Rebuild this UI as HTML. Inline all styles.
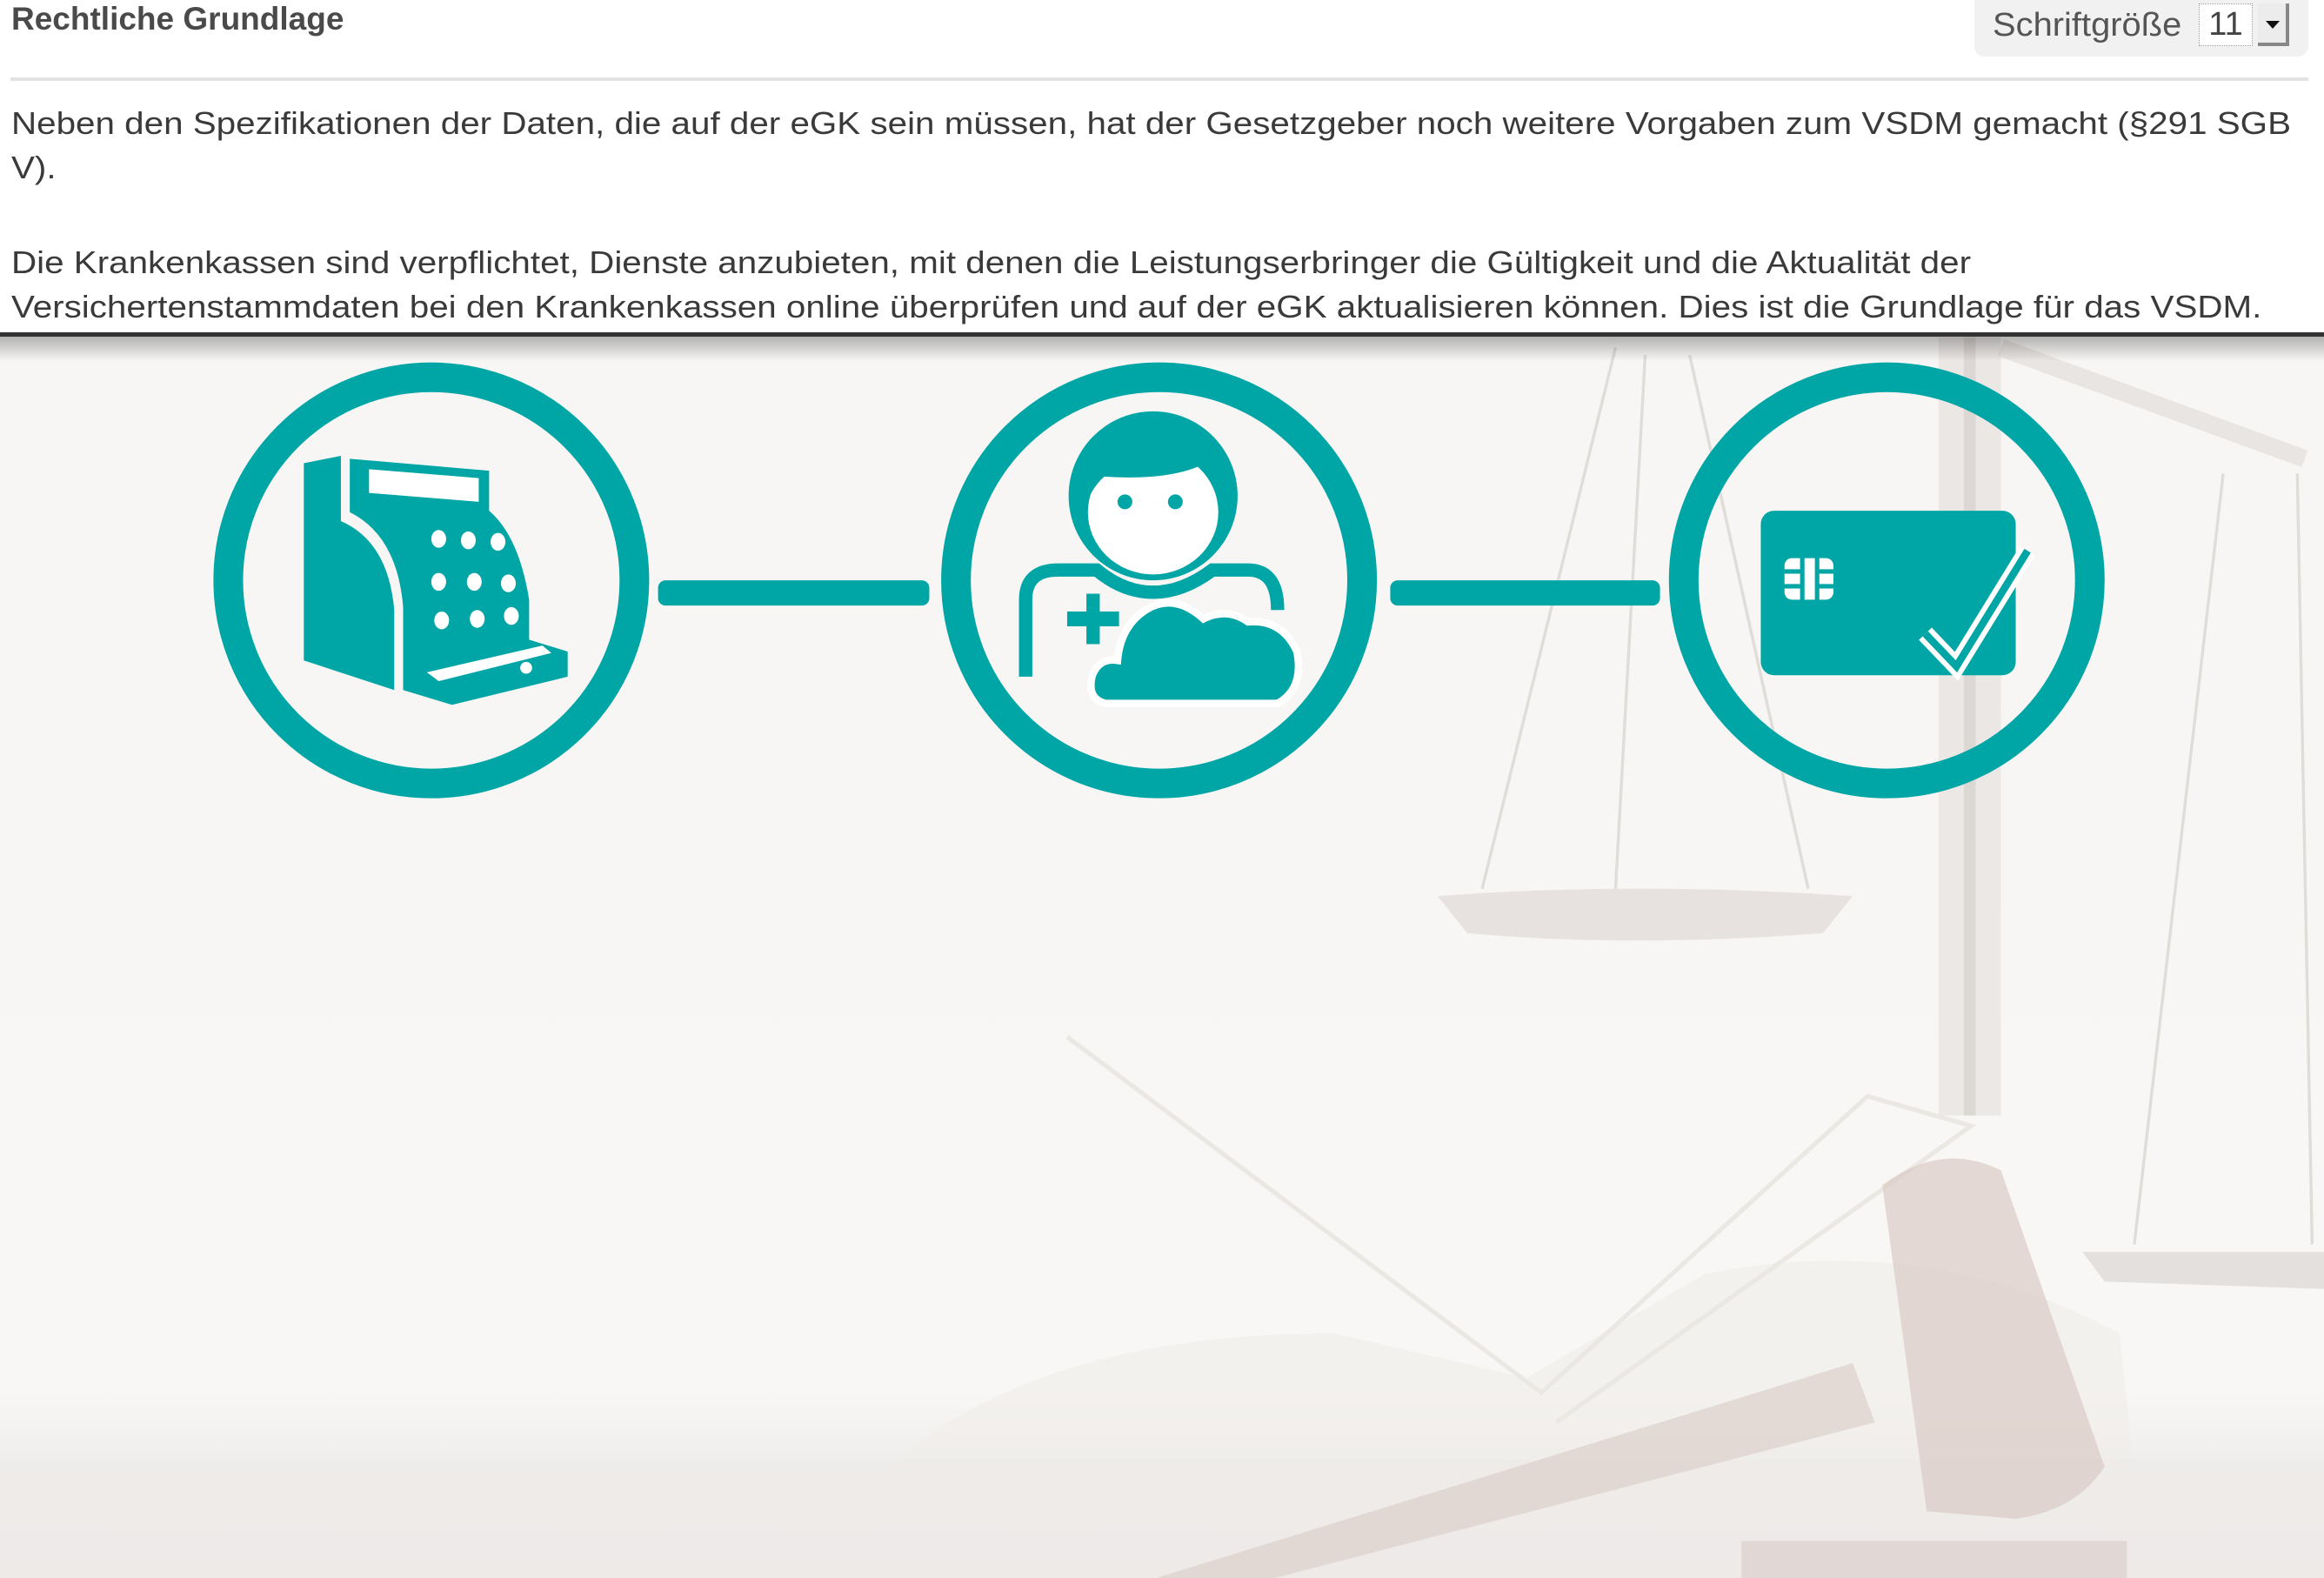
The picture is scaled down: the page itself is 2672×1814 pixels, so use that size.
<!DOCTYPE html>
<html><head><meta charset="utf-8">
<style>
html,body{margin:0;padding:0;width:2672px;height:1814px;overflow:hidden;background:#fff;font-family:"Liberation Sans",sans-serif;color:#3c3c3c}
.title{position:absolute;left:13px;top:0;font-size:37px;font-weight:bold;color:#4a4a4a;line-height:44px}
.fs{position:absolute;left:2270px;top:0;width:384px;height:65px;background:#f1f1f1;border-radius:0 0 12px 12px}
.fs span.l{position:absolute;left:21px;top:6px;font-size:38px;color:#555;line-height:46px;transform:scaleX(1.05);transform-origin:left}
.fs .num{position:absolute;left:258px;top:4px;width:62px;height:49px;background:#fff;border:1px dotted #999;box-sizing:border-box;font-size:38px;line-height:47px;text-align:center;color:#444}
.fs .dd{position:absolute;left:326px;top:4px;width:36px;height:49px;background:#ececec;border-right:4px solid #888;border-bottom:4px solid #888;box-sizing:border-box}
.fs .dd:after{content:"";position:absolute;left:9px;top:20px;border-left:8px solid transparent;border-right:8px solid transparent;border-top:9px solid #111}
.hr{position:absolute;left:12px;top:89px;width:2642px;height:4px;background:#e2e2e2}
.p{position:absolute;left:13px;font-size:36.5px;line-height:51px;color:#3a3a3a;white-space:nowrap;transform:scaleX(1.106);transform-origin:left top}
.dark{position:absolute;left:0;top:382px;width:2672px;height:5px;background:#333;z-index:3}
.shadow{position:absolute;left:0;top:387px;width:2672px;height:28px;background:linear-gradient(rgba(0,0,0,.28),rgba(0,0,0,0));z-index:3}
svg.bg{position:absolute;left:0;top:386px}
</style></head><body>
<div class="title">Rechtliche Grundlage</div>
<div class="fs"><span class="l">Schriftgröße</span><div class="num">11</div><div class="dd"></div></div>
<div class="hr"></div>
<div class="p" style="top:116px">Neben den Spezifikationen der Daten, die auf der eGK sein müssen, hat der Gesetzgeber noch weitere Vorgaben zum VSDM gemacht (§291 SGB<br>V).</div>
<div class="p" style="top:276px">Die Krankenkassen sind verpflichtet, Dienste anzubieten, mit denen die Leistungserbringer die Gültigkeit und die Aktualität der<br>Versichertenstammdaten bei den Krankenkassen online überprüfen und auf der eGK aktualisieren können. Dies ist die Grundlage für das VSDM.</div>
<svg class="bg" width="2672" height="1428" viewBox="0 227 1568 838" preserveAspectRatio="none">
<defs>
<linearGradient id="g" x1="0" y1="0" x2="0" y2="1"><stop offset="0" stop-color="#f7f6f4"/><stop offset="0.85" stop-color="#f8f7f5"/><stop offset="0.9" stop-color="#f1efed"/><stop offset="1" stop-color="#eeebe9"/></linearGradient>
</defs>
<rect x="0" y="227" width="1568" height="838" fill="url(#g)"/>
<rect x="1308" y="228" width="42" height="525" fill="#e2deda" opacity="0.6"/>
<rect x="1325" y="228" width="8" height="525" fill="#cdc7c4" opacity="0.5"/>
<path d="M1350,235 L1555,310" stroke="#dcd5d1" stroke-width="12" opacity="0.5"/>
<path d="M1090,235 L1000,600 M1110,240 L1090,600 M1140,240 L1220,600" stroke="#e0dcd8" stroke-width="2" fill="none"/>
<path d="M970,605 Q1100,595 1250,605 L1230,630 Q1100,640 990,630 Z" fill="#dcd6d2" opacity="0.6"/>
<path d="M1500,320 L1440,840 M1550,320 L1560,840" stroke="#e0dcd8" stroke-width="2"/>
<path d="M1405,845 L1568,845 L1568,870 L1420,865 Z" fill="#d6d0cd" opacity="0.6"/>
<path d="M600,990 Q700,900 900,900 L1030,930 L1150,860 Q1300,830 1430,900 L1440,990 L1000,1010 Z" fill="#f0edea" opacity="0.6"/>
<path d="M720,700 L1040,940 L1260,740 L1330,760 L1050,960" fill="none" stroke="#ebe7e3" stroke-width="3"/>
<rect x="0" y="985" width="1568" height="80" fill="#ece9e7" opacity="0.6"/>
<path d="M780,1065 L1250,920 L1265,960 L860,1065 Z" fill="#d9cbc6" opacity="0.6"/>
<path d="M1270,800 Q1310,770 1350,790 L1420,990 Q1400,1020 1360,1025 L1300,1020 Z" fill="#d7c7c1" opacity="0.65"/>
<rect x="1175" y="1040" width="260" height="25" fill="#d7c9c4" opacity="0.55"/>
<rect x="444" y="392" width="183" height="17" rx="5" fill="#00a5a5"/>
<rect x="938" y="392" width="182" height="17" rx="5" fill="#00a5a5"/>
<g fill="none" stroke="#00a5a5" stroke-width="20">
<circle cx="291" cy="392" r="137"/>
<circle cx="782" cy="392" r="137"/>
<circle cx="1273" cy="392" r="137"/>
</g>
<g fill="#00a5a5">
<path d="M205,313 L230,308 L230,352 Q262,366 266,412 L266,466 L205,446 Z"/>
<path d="M236,310 L330,318 L330,345 Q350,362 357,405 L357,432 L383,440 L383,457 L305,476 L272,466 L272,410 Q268,362 236,346 Z"/>
</g>
<g fill="#fff">
<polygon points="249,317 323,323 323,339 249,333"/>
<ellipse cx="296" cy="364" rx="5" ry="6"/><ellipse cx="316" cy="365" rx="5" ry="6"/><ellipse cx="336" cy="366" rx="5" ry="6"/>
<ellipse cx="296" cy="393" rx="5" ry="6"/><ellipse cx="320" cy="393" rx="5" ry="6"/><ellipse cx="343" cy="394" rx="5" ry="6"/>
<ellipse cx="298" cy="419" rx="5" ry="6"/><ellipse cx="322" cy="418" rx="5" ry="6"/><ellipse cx="345" cy="416" rx="5" ry="6"/>
<polygon points="288,454 366,436 372,441 296,460"/>
<circle cx="355" cy="451" r="4"/>
</g>
<path d="M692,457 L692,405 Q692,385 714,385 L740,385 Q758,400 778,400 Q798,400 818,385 L842,385 Q862,385 862,412" fill="none" stroke="#00a5a5" stroke-width="9"/>
<circle cx="778" cy="335" r="57" fill="#00a5a5"/>
<ellipse cx="778" cy="346" rx="44" ry="42" fill="#fff"/>
<path d="M731,345 Q728,282 778,279 Q828,282 826,345 Q822,322 815,312 Q792,325 745,322 Q736,330 731,345 Z" fill="#00a5a5"/>
<circle cx="759" cy="339" r="5" fill="#00a5a5"/><circle cx="793" cy="339" r="5" fill="#00a5a5"/>
<rect x="733" y="401" width="9" height="34" fill="#00a5a5"/><rect x="720" y="413" width="35" height="10" fill="#00a5a5"/>
<path d="M746,475 Q733,472 737,456 Q742,444 754,446 Q756,423 773,412 Q792,400 812,418 Q828,410 842,420 Q865,418 875,440 Q880,465 862,475 Z" fill="#00a5a5" stroke="#fff" stroke-width="5"/>
<rect x="1188" y="345" width="172" height="111" rx="9" fill="#00a5a5"/>
<g fill="#fff"><rect x="1204" y="377" width="33" height="28" rx="5"/></g>
<g stroke="#00a5a5" stroke-width="3"><line x1="1216" y1="375" x2="1216" y2="407"/><line x1="1226" y1="375" x2="1226" y2="407"/><line x1="1202" y1="386" x2="1215" y2="386"/><line x1="1202" y1="396" x2="1215" y2="396"/><line x1="1227" y1="386" x2="1239" y2="386"/><line x1="1227" y1="396" x2="1239" y2="396"/></g>
<polyline points="1299,428 1320,450 1368,372" fill="none" stroke="#fff" stroke-width="12"/>
<polyline points="1299,428 1320,450 1368,372" fill="none" stroke="#00a5a5" stroke-width="5"/>
</svg>
<div class="dark"></div><div class="shadow"></div>
</body></html>
